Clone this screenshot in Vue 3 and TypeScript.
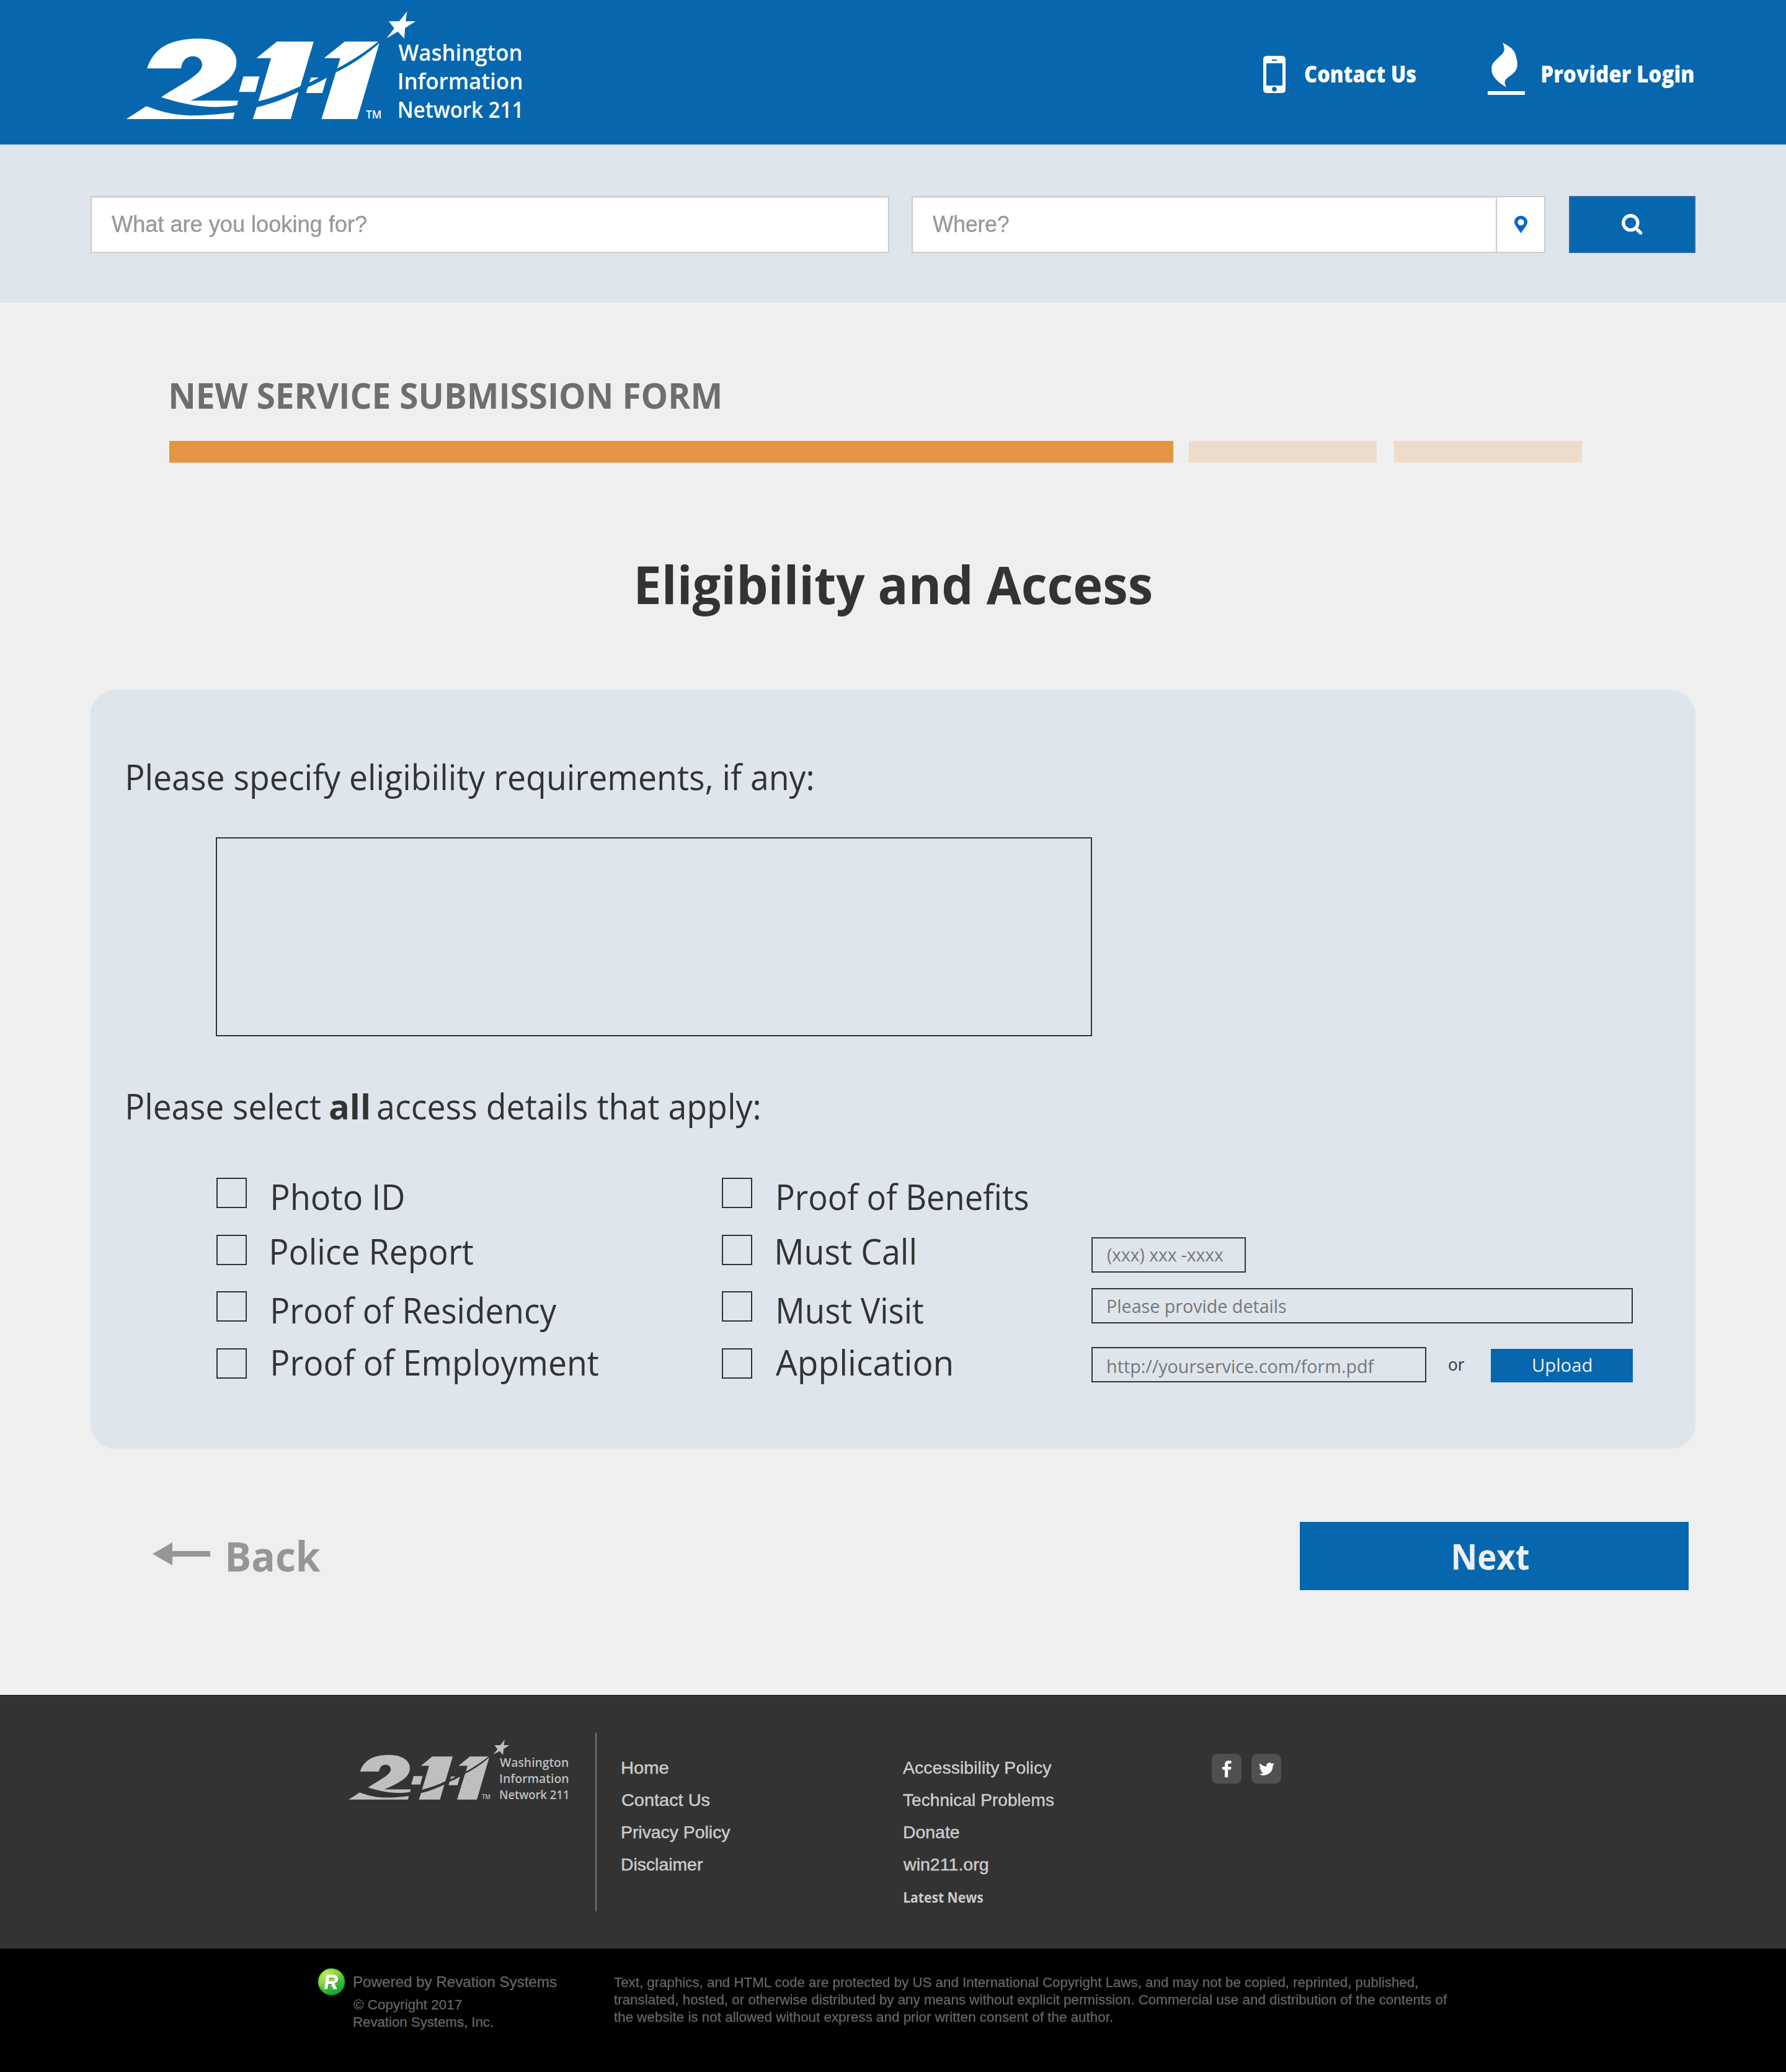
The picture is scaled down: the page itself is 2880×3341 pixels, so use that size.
<script setup lang="ts">
import type { Directive } from 'vue'

interface Label {
  text: string
  width: number
}

const canvas = document.createElement('canvas').getContext('2d')!

// Condenses or widens a line so that its ink fills exactly the given width.
const vFit: Directive<HTMLElement, number> = {
  mounted(el, { value }) {
    const cs = getComputedStyle(el)
    canvas.font = `${cs.fontWeight} ${cs.fontSize} ${cs.fontFamily}`
    const m = canvas.measureText((el.textContent ?? '').trim())
    const scale = value / (m.actualBoundingBoxLeft + m.actualBoundingBoxRight)
    el.style.width = `${value}px`
    el.style.transform = `translateX(${m.actualBoundingBoxLeft * scale}px) scaleX(${scale})`
  },
}

const logoLines = [
  { text: 'Washington', x: 1036, y: 293, w: 448 },
  { text: 'Information', x: 1032, y: 431, w: 454 },
  { text: 'Network 211', x: 1032, y: 570, w: 456 },
]

const documents: Label[] = [
  { text: 'Photo ID', width: 211 },
  { text: 'Police Report', width: 325 },
  { text: 'Proof of Residency', width: 458 },
  { text: 'Proof of Employment', width: 525 },
]
const actions: Label[] = [
  { text: 'Proof of Benefits', width: 403 },
  { text: 'Must Call', width: 222 },
  { text: 'Must Visit', width: 234 },
  { text: 'Application', width: 283 },
]
const siteLinks: Label[] = [
  { text: 'Home', width: 75 },
  { text: 'Contact Us', width: 141 },
  { text: 'Privacy Policy', width: 174.5 },
  { text: 'Disclaimer', width: 130 },
]
const helpLinks: Label[] = [
  { text: 'Accessibility Policy', width: 239.5 },
  { text: 'Technical Problems', width: 243 },
  { text: 'Donate', width: 89 },
  { text: 'win211.org', width: 137 },
]
const legal: Label[] = [
  { text: 'Text, graphics, and HTML code are protected by US and International Copyright Laws, and may not be copied, reprinted, published,', width: 1297 },
  { text: 'translated, hosted, or otherwise distributed by any means without explicit permission. Commercial use and distribution of the contents of', width: 1344 },
  { text: 'the website is not allowed without express and prior written consent of the author.', width: 804 },
]
</script>

<template>
  <div class="page">
    <svg class="defs" width="0" height="0">
      <defs>
        <g id="mark">
          <path d="M128 331C150 238 205 187 318 187C398 187 451 234 451 300C451 380 392 424 285 487H457L453 509C350 530 270 508 179 470C262 398 327 360 327 313C327 290 313 272 294 272C270 272 253 295 251 331Z" />
          <path d="M53 576L125 514C230 565 290 568 444 544L439 576Z" />
          <path d="M476 370H534L519 445H460Z" />
          <path d="M597 201H730L682 417C640 443 590 470 530 490L576 281H523Z" />
          <path d="M675 445L647 576H510L524 519C580 502 630 475 675 445Z" />
          <path d="M720 375H749L714 400Z" />
          <path d="M777 376L761 450H702L709 421Q745 402 777 376Z" />
          <path d="M842 201H963C920 248 870 292 815 331L826 281H767Z" />
          <path d="M967 209L887 576H758L810 350C870 310 920 265 967 209Z" />
          <path d="M1067 55L1062 103H1098L1060 136L1057 187L1034 153L993 185L1021 137L1001 103H1039Z" />
        </g>
      </defs>
    </svg>

    <header class="header">
      <svg class="brand" viewBox="0 0 1568 699" preserveAspectRatio="none">
        <use href="#mark" />
        <text x="919" y="573" font-size="54" textLength="56" lengthAdjust="spacingAndGlyphs">TM</text>
        <text v-for="l in logoLines" :key="l.text" :x="l.x" :y="l.y" font-size="107" :textLength="l.w" lengthAdjust="spacingAndGlyphs">{{ l.text }}</text>
      </svg>
      <svg class="phone" viewBox="0 0 36 60">
        <path fill-rule="evenodd" d="M6 0H30Q36 0 36 6V54Q36 60 30 60H6Q0 60 0 54V6Q0 0 6 0ZM14 6V8H22V6ZM6 12Q5 12 5 13V47Q5 48 6 48H30Q31 48 31 47V13Q31 12 30 12ZM18 50A3.8 3.8 0 1 0 18 57.6A3.8 3.8 0 1 0 18 50Z" />
      </svg>
      <a v-fit="179" class="nav-text contact fit">Contact Us</a>
      <svg class="flame" viewBox="821 87 118 252" preserveAspectRatio="none">
        <path d="M868 87C888 101 903 119 907 135C922 200 915 222 893 246C871 268 873 278 880 302C852 277 833 250 833 213C833 185 845 174 865 144C877 128 875 108 868 87Z" />
        <rect x="821" y="321" width="118" height="18" />
      </svg>
      <a v-fit="245" class="nav-text provider fit">Provider Login</a>
    </header>

    <section class="search">
      <div class="field what"><span v-fit="411" class="fit">What are you looking for?</span></div>
      <div class="field where">
        <span v-fit="122.5" class="fit">Where?</span>
        <div class="addon">
          <svg width="21" height="28" viewBox="0 0 21 28"><path fill-rule="evenodd" d="M10.5 0C16.5 0 21 4.500 21 10.300C21 15 15 21 10.500 28C6 21 0 15 0 10.300C0 4.500 4.500 0 10.500 0ZM10.500 5.200A5.200 5.200 0 1 0 10.500 15.600A5.200 5.200 0 1 0 10.500 5.200Z" /></svg>
        </div>
      </div>
      <button class="go">
        <svg width="34" height="34" viewBox="0 0 34 34"><circle cx="14.300" cy="14.300" r="11.600" /><path d="M23 23L30.500 30.500" /></svg>
      </button>
    </section>

    <main class="main">
      <h2 v-fit="884.5" class="form-title fit">NEW SERVICE SUBMISSION FORM</h2>
      <div class="progress"><i class="done"></i><i></i><i></i></div>
      <h1 v-fit="829" class="heading fit">Eligibility and Access</h1>

      <section class="panel">
        <p v-fit="1104" class="question fit">Please specify eligibility requirements, if any:</p>
        <div class="textarea"></div>
        <p class="question split">
          <span v-fit="311" class="fit">Please select</span>
          <b v-fit="62" class="fit">all</b>
          <span v-fit="615" class="fit">access details that apply:</span>
        </p>
        <div class="options">
          <ul class="checks first">
            <li v-for="o in documents" :key="o.text"><i class="box"></i><span v-fit="o.width" class="fit">{{ o.text }}</span></li>
          </ul>
          <ul class="checks second">
            <li v-for="o in actions" :key="o.text"><i class="box"></i><span v-fit="o.width" class="fit">{{ o.text }}</span></li>
          </ul>
          <div class="extras">
            <div class="input tel"><span v-fit="187" class="fit">(xxx) xxx -xxxx</span></div>
            <div class="input details"><span v-fit="287.5" class="fit">Please provide details</span></div>
            <div class="upload-row">
              <div class="input url"><span v-fit="431" class="fit">http://yourservice.com/form.pdf</span></div>
              <span v-fit="26" class="or fit">or</span>
              <button class="upload"><span v-fit="94" class="fit">Upload</span></button>
            </div>
          </div>
        </div>
      </section>

      <div class="buttons">
        <svg class="arrow" viewBox="0 0 93 37"><path d="M0 18.500L32 0V14H93V23H32V37Z" /></svg>
        <a v-fit="149" class="back fit">Back</a>
        <button class="next"><span v-fit="121" class="fit">Next</span></button>
      </div>
    </main>

    <footer class="footer">
      <svg class="brand-small" viewBox="0 0 1568 699" preserveAspectRatio="none">
        <use href="#mark" />
        <text x="919" y="573" font-size="54" textLength="56" lengthAdjust="spacingAndGlyphs">TM</text>
        <text v-for="l in logoLines" :key="l.text" :x="l.x" :y="l.y" font-size="107" :textLength="l.w" lengthAdjust="spacingAndGlyphs">{{ l.text }}</text>
      </svg>
      <div class="rule"></div>
      <nav class="links site">
        <a v-for="l in siteLinks" :key="l.text" v-fit="l.width" class="fit">{{ l.text }}</a>
      </nav>
      <nav class="links help">
        <a v-for="l in helpLinks" :key="l.text" v-fit="l.width" class="fit">{{ l.text }}</a>
        <a v-fit="127.5" class="news fit">Latest News</a>
      </nav>
      <div class="social">
        <a><svg width="15" height="27" viewBox="0 0 15 27"><path d="M4 27V14.500H0V10H4V6.500C4 2 6.500 0 10 0H14.500V4.500H11.500C9.700 4.500 9.200 5.300 9.200 6.800V10H14.500L13.900 14.500H9.200V27Z" /></svg></a>
        <a><svg width="25" height="21" viewBox="0 0 24 20"><path d="M24 2.400a9.800 9.800 0 0 1-2.800.8A5 5 0 0 0 23.300.5a9.900 9.900 0 0 1-3.100 1.200 4.900 4.900 0 0 0-8.400 4.500A14 14 0 0 1 1.700 1.100a4.900 4.900 0 0 0 1.500 6.600 4.900 4.900 0 0 1-2.200-.6c0 2.300 1.600 4.400 3.900 4.900a5 5 0 0 1-2.200.1 4.900 4.900 0 0 0 4.600 3.400A9.900 9.900 0 0 1 0 17.500 14 14 0 0 0 21.500 5c1-.7 1.800-1.600 2.500-2.600z" /></svg></a>
      </div>
    </footer>

    <div class="bottom">
      <svg class="r-logo" viewBox="0 0 45 45">
        <defs>
          <linearGradient id="green" x1="0" y1="0" x2=".5" y2="1">
            <stop offset="0" stop-color="#4fb71c" /><stop offset=".45" stop-color="#6ccb2e" /><stop offset="1" stop-color="#10a83c" />
          </linearGradient>
          <radialGradient id="shine" cx=".32" cy=".22" r=".6">
            <stop offset="0" stop-color="#c4ee62" /><stop offset="1" stop-color="#c4ee62" stop-opacity="0" />
          </radialGradient>
        </defs>
        <circle cx="22.500" cy="22.500" r="21.500" fill="url(#green)" stroke="#1c8a1e" stroke-width="1" />
        <circle cx="22.500" cy="22.500" r="21" fill="url(#shine)" />
        <text x="22" y="33.500" text-anchor="middle" class="r">R</text>
      </svg>
      <div class="owner">
        <p v-fit="328" class="powered fit">Powered by Revation Systems</p>
        <p v-fit="175" class="fit">© Copyright 2017</p>
        <p v-fit="225" class="fit">Revation Systems, Inc.</p>
      </div>
      <div class="legal">
        <p v-for="l in legal" :key="l.text" v-fit="l.width" class="fit">{{ l.text }}</p>
      </div>
    </div>
  </div>
</template>

<style>
body {
  margin: 0;
  background: #efefef;
}
</style>

<style scoped>
.page {
  width: 2880px;
  height: 3341px;
  overflow: hidden;
  color: #333;
  font-family: "Open Sans", "Noto Sans", sans-serif;
}
.page * {
  box-sizing: border-box;
}
h1, h2, p, ul {
  margin: 0;
  padding: 0;
  list-style: none;
}
button {
  border: 0;
  border-radius: 0;
  padding: 0;
  font-family: inherit;
}
svg {
  display: block;
  flex: none;
}
.defs {
  position: absolute;
}
.fit {
  display: block;
  flex: none;
  white-space: nowrap;
  transform-origin: 0 50%;
}

.header {
  display: flex;
  align-items: flex-start;
  height: 233px;
  background: #0667af;
  color: #fff;
  fill: #fff;
}
.brand {
  width: 700px;
  height: 233px;
  margin-left: 180px;
  font-weight: 600;
}
.phone {
  width: 36px;
  height: 60px;
  margin: 90px 31px 0 1157px;
}
.nav-text {
  margin-top: 99px;
  font-size: 37px;
  line-height: 40px;
  font-weight: 800;
}
.flame {
  width: 60px;
  height: 84px;
  margin: 69px 27px 0 116px;
}

.search {
  display: flex;
  height: 255px;
  padding: 83px 0 0 146px;
  background: #dee5ec;
}
.field {
  display: flex;
  align-items: center;
  height: 92px;
  padding-left: 32px;
  border: 2px solid #ccc;
  background: #fff;
  box-shadow: inset 0 2px 2px rgba(0, 0, 0, .075);
  color: #999;
  font: 36px/40px "Liberation Sans", Arial, sans-serif;
  -webkit-text-stroke: .4px;
}
.what {
  width: 1288px;
  margin-right: 36px;
}
.where {
  width: 1022px;
  margin-right: 38px;
}
.addon {
  display: flex;
  align-items: center;
  justify-content: center;
  width: 78px;
  height: 88px;
  margin-left: auto;
  border-left: 2px solid #ccc;
  background: #fff;
  fill: #0066d2;
}
.go {
  display: flex;
  align-items: center;
  justify-content: center;
  width: 204px;
  height: 92px;
  border: 2px solid #2e6da4;
  background: #0667af;
}
.go svg {
  fill: none;
  stroke: #fff;
  stroke-width: 5.400px;
  stroke-linecap: round;
}

.main {
  height: 2245px;
  padding-top: 119px;
  background: #efefef;
}
.form-title {
  margin-left: 276px;
  color: #6e6e6e;
  font-size: 57px;
  line-height: 60px;
  font-weight: 700;
}
.progress {
  display: flex;
  height: 35px;
  margin: 44px 0 0 273px;
}
.progress i {
  width: 303px;
  margin-right: 28px;
  background: #eedccb;
}
.progress .done {
  width: 1619px;
  margin-right: 25px;
  background: #e59443;
}
.heading {
  margin: 145px 0 0 1028px;
  font-size: 85px;
  line-height: 100px;
  font-weight: 700;
}
.panel {
  width: 2588px;
  height: 1224px;
  margin: 121px 0 0 146px;
  padding: 110px 0 0 60px;
  border-radius: 40px;
  background: #dee5ec;
}
.question {
  font-size: 56px;
  line-height: 60px;
}
.textarea {
  width: 1413px;
  height: 321px;
  margin: 68px 0 82px 142px;
  border: 2px solid #333;
}
.split {
  display: flex;
  gap: 15px;
}
.options {
  display: flex;
  align-items: flex-start;
  margin: 86px 0 0 142px;
}
.checks {
  display: grid;
  grid-auto-rows: 91.700px;
  font-size: 56px;
  line-height: 60px;
}
.checks li {
  display: flex;
}
.box {
  width: 49px;
  height: 49px;
  margin-right: 42px;
  border: 2px solid #333;
}
.checks li:nth-child(2) span {
  margin-top: -4px;
  margin-left: -2px;
}
.checks li:nth-child(4) span {
  margin-top: -8px;
}
.second li:nth-child(4) span {
  margin-left: -4px;
}
.first {
  width: 815.500px;
  padding-left: .700px;
}
.second {
  width: 596.500px;
}
.extras {
  padding-top: 96px;
}
.input {
  display: flex;
  align-items: center;
  height: 57px;
  padding-left: 24px;
  border: 2px solid #333;
  color: #777;
  font-size: 30px;
  line-height: 40px;
}
.tel {
  width: 249px;
  padding-bottom: 2px;
}
.details {
  width: 873px;
  margin: 25px 0 38px;
}
.url {
  width: 540px;
  padding-top: 4px;
}
.upload-row {
  display: flex;
}
.or {
  margin: 7px 42px 0 36px;
  font-size: 28px;
  line-height: 40px;
}
.upload {
  display: flex;
  align-items: center;
  justify-content: center;
  width: 229px;
  height: 54px;
  margin-top: 3px;
  padding-bottom: 3px;
  background: #0667af;
  color: #efefef;
  font-size: 30px;
  line-height: 40px;
}
.buttons {
  display: flex;
  align-items: flex-start;
  margin: 118px 0 0 246px;
}
.arrow {
  width: 93px;
  height: 37px;
  margin: 33px 29px 0 0;
  fill: #969696;
}
.back {
  margin-top: 14px;
  color: #969696;
  font-size: 67px;
  line-height: 80px;
  font-weight: 700;
}
.next {
  display: flex;
  align-items: center;
  width: 627px;
  height: 110px;
  margin-left: 1579px;
  padding-left: 248px;
  background: #0667af;
  color: #efefef;
  font-size: 57px;
  line-height: 60px;
  font-weight: 700;
}

.footer {
  display: flex;
  align-items: flex-start;
  height: 409px;
  border-top: 1px solid #111;
  background: #333;
  color: #cbcbcb;
}
.brand-small {
  width: 389px;
  height: 129.700px;
  margin: 61px 22px 0 549px;
  fill: #bfbfbf;
  font-weight: 600;
}
.rule {
  width: 2px;
  height: 288px;
  margin: 60px 40.500px 0 0;
  background: #777;
}
.links {
  margin-top: 91px;
  font: 28px/52px "Liberation Sans", Arial, sans-serif;
  -webkit-text-stroke: .5px;
}
.site {
  width: 453px;
}
.help {
  width: 498.500px;
}
.help a:nth-child(3) {
  margin-left: 2px;
}
.help .news {
  margin-left: 2px;
  font: 700 22.500px/54px "Open Sans", sans-serif;
  -webkit-text-stroke: 0;
}
.social {
  display: flex;
  gap: 16px;
  margin-top: 94px;
}
.social a {
  display: flex;
  align-items: center;
  justify-content: center;
  width: 48px;
  height: 48px;
  border-radius: 9px;
  background: #505050;
  fill: #fff;
}

.bottom {
  display: flex;
  align-items: flex-start;
  height: 199px;
  background: #000;
  color: #666;
  font: 22px/28px "Liberation Sans", Arial, sans-serif;
  -webkit-text-stroke: .3px;
}
.r-logo {
  width: 45px;
  height: 45px;
  margin: 31px 13px 0 511.500px;
}
.r {
  font: italic 700 31px "Liberation Sans", Arial, sans-serif;
  fill: #fff;
  stroke: #fff;
  stroke-width: 1px;
  filter: drop-shadow(1.500px 1.500px 0 #2c7a1d);
}
.owner {
  width: 420px;
  margin-top: 39px;
}
.powered {
  margin-bottom: 7.500px;
  font-size: 24px;
  line-height: 30px;
}
.legal {
  margin-top: 41px;
}
</style>
